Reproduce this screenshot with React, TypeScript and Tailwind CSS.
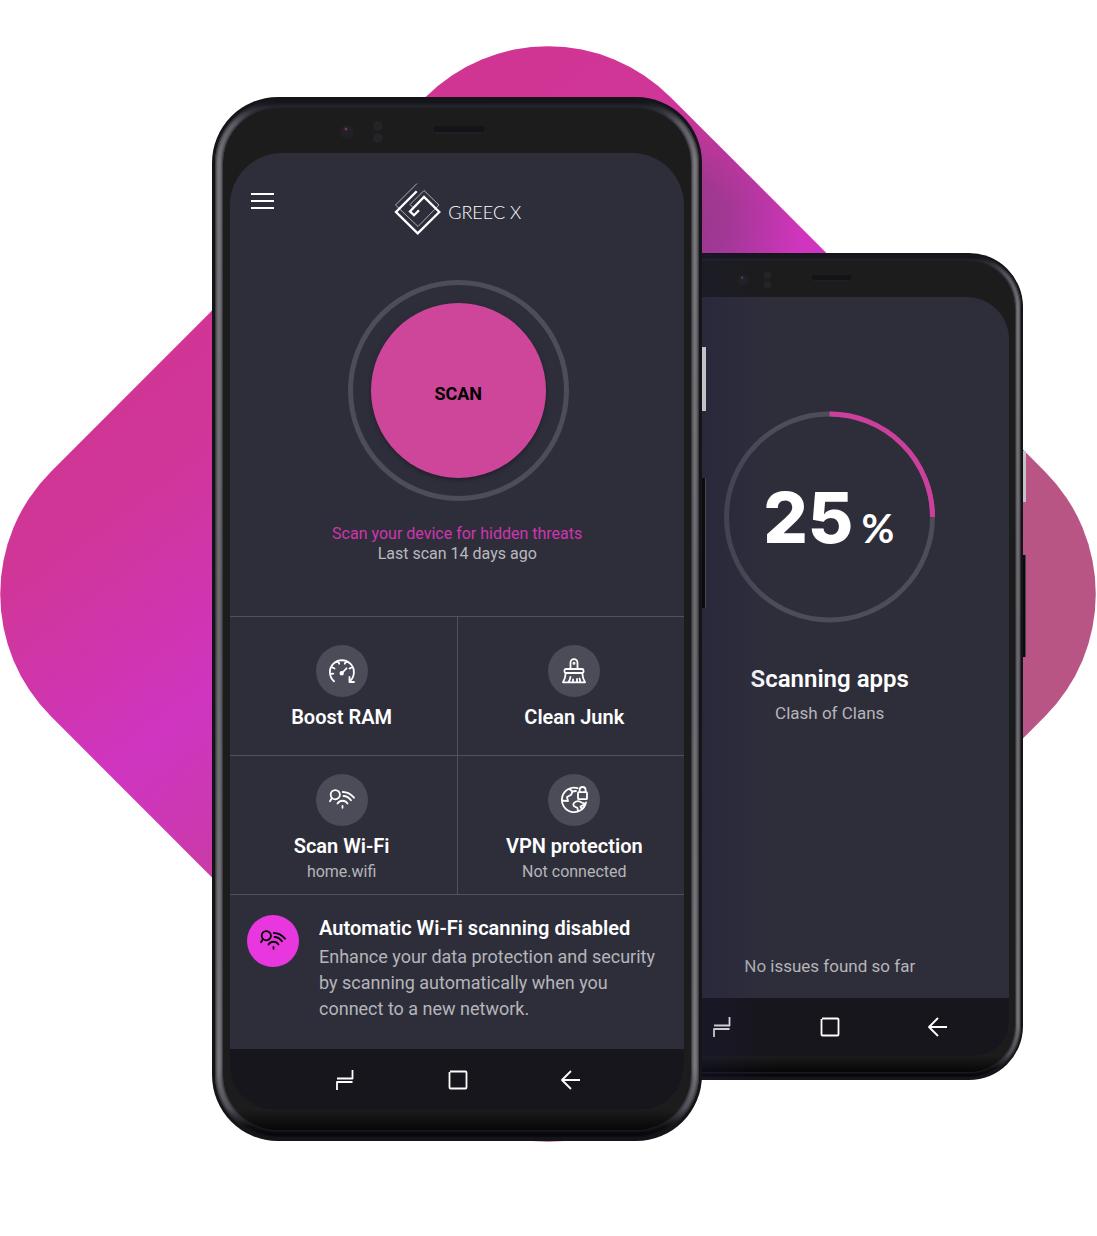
import type { ReactNode } from "react";

function Backdrop() {
  return (
    <svg
      aria-hidden="true"
      viewBox="0 0 1097 1236"
      className="absolute inset-x-0 top-0 w-full"
    >
      <defs>
        <linearGradient id="pink" gradientUnits="userSpaceOnUse" x1="210" y1="280" x2="690" y2="920">
          <stop offset="0" stopColor="#d03594" />
          <stop offset="0.14" stopColor="#d03696" />
          <stop offset="0.42" stopColor="#cf35c0" />
          <stop offset="0.56" stopColor="#cb39ac" />
          <stop offset="0.8" stopColor="#b95585" />
        </linearGradient>
        <radialGradient id="shade" gradientUnits="userSpaceOnUse" cx="680" cy="225" r="120">
          <stop offset="0" stopColor="#503c60" stopOpacity="0.45" />
          <stop offset="0.4" stopColor="#503c60" stopOpacity="0.36" />
          <stop offset="1" stopColor="#503c60" stopOpacity="0" />
        </radialGradient>
        <clipPath id="diamond">
          <rect x="110" y="156" width="876" height="876" rx="173" transform="rotate(45 548 594)" />
        </clipPath>
      </defs>
      <g clipPath="url(#diamond)">
        <rect width="1097" height="1236" fill="url(#pink)" />
        <circle cx="680" cy="225" r="120" fill="url(#shade)" />
      </g>
    </svg>
  );
}

function Logo() {
  return (
    <svg aria-hidden="true" viewBox="394 182 48 54" className="h-[54px] w-12" fill="none" stroke="#fff">
      <path
        d="M417 183.500L395.500 205L418 226.500L439 205L424 190.500L410 204.500L413 207.500"
        strokeWidth="0.8"
        opacity="0.75"
      />
      <path
        d="M416.700 191.300L396 212L417.700 233.300L439.300 212L424 197L410 211.500L414 215.200L419 210.300"
        strokeWidth="2.3"
      />
    </svg>
  );
}

function Glyph({ children }: { children: ReactNode }) {
  return (
    <svg
      aria-hidden="true"
      viewBox="-14 -14 28 28"
      className="size-7"
      fill="none"
      stroke="currentColor"
      strokeWidth="1.8"
      strokeLinecap="round"
      strokeLinejoin="round"
    >
      {children}
    </svg>
  );
}

function GaugeIcon() {
  return (
    <Glyph>
      <path d="M-8 10.300A12 12 0 1 1 7.800 10.300M7.500 6V11H12M-12 3L-8.700 2.700M-10.500-4L-7.500-2.500M-4-10L-2.800-7.300M4-10L2.800-7.300M10.500-4L7.500-2.500M.5 1.500L4.500-2.700" />
      <circle cx="-0.300" cy="2.300" r="1.300" fill="currentColor" />
    </Glyph>
  );
}

function BrushIcon() {
  return (
    <Glyph>
      <path d="M-3.500-2V-8.300a3.500 3.500 0 0 1 7 0V-2" />
      <circle cx="0" cy="-7.700" r="0.600" />
      <rect x="-9.500" y="-2" width="19" height="4" rx="1.500" />
      <path d="M-8.300 2.300C-8.500 6-9.500 9-11 11.300H11C9.500 9 8.500 6 8.300 2.300M-5.500 11C-4.300 9.500-3.800 8-3.600 6M-1 11V8.500M3 11V8M6.500 11L5.500 7.500" />
    </Glyph>
  );
}

function WifiSearchIcon() {
  return (
    <Glyph>
      <circle cx="-6.700" cy="-5.300" r="4.600" />
      <path d="M-10-2L-12 1.300M.8-8C5-8 9-5.800 12-2.300M1.500-4C4.500-4 7-2.600 9 .3M-4.500 3.500C-2-.2 3-.2 5.500 3.500M.5 6V7.800" />
    </Glyph>
  );
}

function GlobeLockIcon() {
  return (
    <Glyph>
      <path d="M3.500-11.800A12.200 12.200 0 1 0 12 2.500M-12 .5L-6 1.200L-7-3L-2.800-5.300L-1.500-8.500L2-9M-4.500-11L-1.500-8.500M11.500 3.800L7.500 2.500C4-.5-.5 2-.7 4.800C-.5 7.800 3.200 6.300 3.600 8.300L3.800 11.500M8 9.300L6.500 6.500L11.500 3.800" />
      <rect x="4" y="-7.800" width="9" height="7" rx="0.800" />
      <path d="M5.600-7.800V-10a3 3 0 0 1 6 0V-7.800" />
    </Glyph>
  );
}

const navIcons = [
  { label: "Recent apps", d: "M4 10.500H19.500V2M19.500 14H4V22" },
  { label: "Home", d: "M4 3.500H19.500Q20.500 3.500 20.500 4.500V19.500Q20.500 20.500 19.500 20.500H4.500Q3.500 20.500 3.500 19.500V4" },
  { label: "Back", d: "M12 3L3 12L12 21M3 12H21" },
];

function NavBar({ className }: { className: string }) {
  return (
    <nav aria-label="System" className={`flex items-center justify-center bg-[#17161c] ${className}`}>
      {navIcons.map((icon) => (
        <button key={icon.label} type="button" aria-label={icon.label}>
          <svg viewBox="0 0 24 24" className="size-6" fill="none" stroke="#fff" strokeWidth="1.8" strokeLinejoin="round">
            <path d={icon.d} />
          </svg>
        </button>
      ))}
    </nav>
  );
}

function Bezel({ className }: { className: string }) {
  return (
    <svg aria-hidden="true" viewBox="-122 2 240 48" className={className}>
      <circle cx="-112" cy="26" r="7" fill="#212125" />
      <circle cx="-113" cy="23" r="1.500" fill="#7a3070" />
      <circle cx="-81" cy="20" r="5" fill="#232328" />
      <circle cx="-81" cy="32" r="5" fill="#232328" />
      <rect x="-25" y="20" width="50" height="6" rx="3" fill="#131318" />
      <path d="M-23 27H23" stroke="#26262a" />
    </svg>
  );
}

function Tile({ icon, title, note, className }: { icon: ReactNode; title: string; note?: string; className: string }) {
  return (
    <button type="button" className={`flex min-h-[139px] flex-col items-center border-t border-[#50515c] ${className}`}>
      <span className="flex size-[52px] items-center justify-center rounded-full bg-[#4b4c57]">{icon}</span>
      <span className="mt-[7px] text-xl leading-[26px] font-semibold">{title}</span>
      {note && <span className="mt-[3px] text-base leading-5 text-[#b5b5b9]">{note}</span>}
    </button>
  );
}

function MainPhone() {
  return (
    <section
      aria-label="Dashboard"
      className="relative z-10 min-w-0 grow-[490] basis-0 rounded-[66px] bg-[#141419] p-[3px]"
    >
      <span className="absolute top-[250px] left-full h-16 w-1 bg-[#c3c3c5]" />
      <span className="absolute top-[381px] left-full h-[130px] w-1 border-r border-[#45454a] bg-[#0c0c0f]" />
      <div className="rounded-[63px] bg-[linear-gradient(to_bottom,#0c0c10_0,#2c2c34_8px,#606068_24px,#7c7c80_60px,#6c6c71_50%,#7c7c80_calc(100%-70px),#55555b_calc(100%-30px),#101014_calc(100%-12px),#050507_100%)] p-2 shadow-[inset_0_0_3px_1px_#1c1c22]">
        <div className="rounded-[55px] bg-[linear-gradient(to_bottom,#1c1c1c_calc(100%-20px),#060606_100%)] px-[7px] pb-5 shadow-[0_0_3px_1px_#202028]">
          <div className="flex h-[45px] justify-center">
            <Bezel className="h-12 w-60" />
          </div>
          <div className="overflow-hidden rounded-t-[52px] rounded-b-[44px] bg-[#2e2e3b]">
            <header className="grid grid-cols-[1fr_auto_1fr] items-start px-5 pt-[29px]">
              <button type="button" aria-label="Menu" className="mt-[7px] size-6 justify-self-start">
                <svg viewBox="0 0 24 24" className="size-6" stroke="#fff" strokeWidth="2">
                  <path d="M1 5H24M1 12H24M1 19H24" />
                </svg>
              </button>
              <div className="flex items-center gap-1.5 pl-px">
                <Logo />
                <span className="mt-1.5 font-['Lato'] text-lg leading-6 font-light">GREEC X</span>
              </div>
            </header>
            <div className="mt-11 flex justify-center pl-0.5">
              <div className="flex size-[221px] items-center justify-center rounded-full border-[5px] border-[#4c4d58]">
                <button
                  type="button"
                  className="size-[175px] rounded-full bg-[#cd4699] pt-1.5 text-lg font-bold text-black shadow-[0_2px_4px_#20202c]"
                >
                  SCAN
                </button>
              </div>
            </div>
            <div className="mt-[23px] text-center text-base leading-5">
              <p className="text-[#d035b0]">Scan your device for hidden threats</p>
              <p className="text-[#b9b9bc]">Last scan 14 days ago</p>
            </div>
            <div className="mt-[52px] grid grid-cols-[228fr_226fr]">
              <Tile icon={<GaugeIcon />} title="Boost RAM" className="border-r pt-7 pr-1" />
              <Tile icon={<BrushIcon />} title="Clean Junk" className="pt-7 pl-1.5" />
              <Tile icon={<WifiSearchIcon />} title="Scan Wi-Fi" note="home.wifi" className="border-r pt-[18px] pr-1" />
              <Tile icon={<GlobeLockIcon />} title="VPN protection" note="Not connected" className="pt-[18px] pl-1.5" />
            </div>
            <div className="flex items-start gap-5 border-t border-[#50515c] pt-5 pr-5 pb-[27px] pl-[17px]">
              <span className="flex size-[52px] shrink-0 items-center justify-center rounded-full bg-[#e837df] text-black">
                <WifiSearchIcon />
              </span>
              <div>
                <h2 className="text-xl leading-[26px] font-semibold">Automatic Wi-Fi scanning disabled</h2>
                <p className="mt-[3px] text-lg leading-[26px] text-[#b5b5b9]">
                  Enhance your data protection and security by scanning automatically when you connect to a new network.
                </p>
              </div>
            </div>
            <NavBar className="h-[61px] gap-[89px] pl-0.5" />
          </div>
        </div>
      </div>
    </section>
  );
}

function ProgressPhone() {
  return (
    <section
      aria-label="Scan progress"
      className="relative mt-[156px] -ml-[66px] min-w-0 grow-[387] basis-0 rounded-[54px] bg-[#141419] p-0.5"
    >
      <span className="absolute top-[198px] left-full h-[51px] w-[3px] bg-[#c3c3c5]" />
      <span className="absolute top-[302px] left-full h-[102px] w-[3px] border-r border-[#45454a] bg-[#0c0c0f]" />
      <div className="rounded-[52px] bg-[linear-gradient(to_bottom,#0c0c10_0,#2c2c34_7px,#5a5a62_20px,#77777b_50px,#6c6c71_50%,#77777b_calc(100%-56px),#505056_calc(100%-24px),#101014_calc(100%-10px),#050507_100%)] p-1.5 shadow-[inset_0_0_2px_1px_#1c1c22]">
        <div className="rounded-[46px] bg-[linear-gradient(to_bottom,#1c1c1c_calc(100%-16px),#060606_100%)] px-1.5 pb-4 shadow-[0_0_2px_1px_#202028]">
          <div className="flex h-9 justify-center">
            <Bezel className="h-[38px] w-[190px]" />
          </div>
          <div className="overflow-hidden rounded-t-[42px] rounded-b-[34px] bg-[#2e2e3b]">
            <div className="flex h-[701px] flex-col items-center pt-[114px] pb-5">
              <div className="grid size-[212px] place-items-center">
                <svg
                  role="img"
                  aria-label="25 percent scanned"
                  viewBox="0 0 212 212"
                  className="col-start-1 row-start-1 size-[212px]"
                  fill="none"
                  strokeWidth="5"
                >
                  <circle cx="105.500" cy="106" r="103" stroke="#4c4d58" />
                  <path d="M105.500 3A103 103 0 0 1 208.500 106" stroke="#cd3f9c" />
                </svg>
                <p className="col-start-1 row-start-1 flex items-baseline gap-2 pt-3 pr-0.5">
                  <span className="font-['Inter'] text-[70px] leading-[80px] font-extrabold">25</span>
                  <span className="font-['Lato'] text-[40px] leading-[80px] font-bold">%</span>
                </p>
              </div>
              <h2 className="mt-10 text-2xl leading-8 font-semibold">Scanning apps</h2>
              <p className="mt-2 text-[17px] leading-5 text-[#b5b5b9]">Clash of Clans</p>
              <p className="mt-auto text-[17px] leading-6 text-[#b5b5b9]">No issues found so far</p>
            </div>
            <NavBar className="h-[58px] gap-[84px]" />
          </div>
        </div>
      </div>
      <span className="pointer-events-none absolute inset-y-0 left-[66px] w-[72px] bg-linear-to-r from-[#1c1c3e]/30 to-transparent" />
    </section>
  );
}

export default function App() {
  return (
    <main className="relative mx-auto min-h-screen max-w-[1097px] overflow-hidden bg-white font-['Roboto',sans-serif] text-white">
      <Backdrop />
      <div className="flex items-start pt-[97px] pr-[74px] pb-[95px] pl-[212px]">
        <MainPhone />
        <ProgressPhone />
      </div>
    </main>
  );
}
